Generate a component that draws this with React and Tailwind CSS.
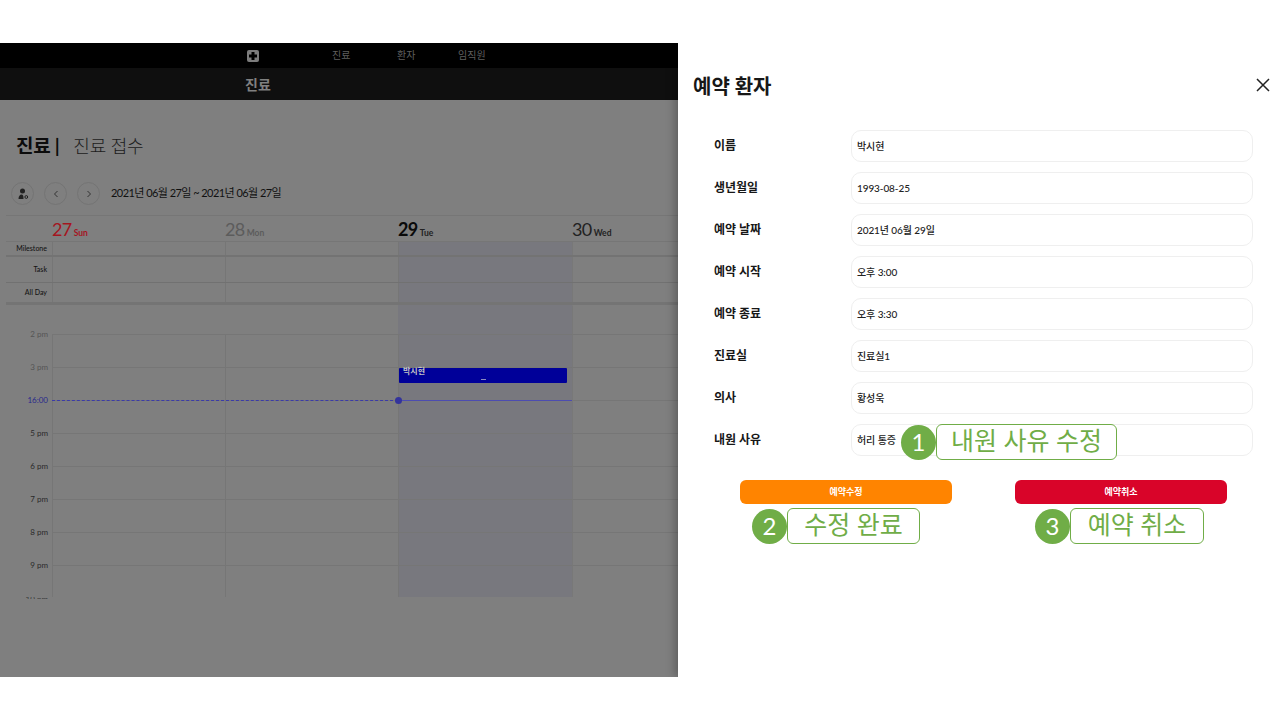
const kr = '[font-family:Lato,"Noto_Sans_CJK_KR",sans-serif]';

const Cell = ({ tue, children, className = "" }) => (
  <div className={`border-l border-[#767676] ${tue ? "bg-[#78787e]" : ""} ${className}`}>{children}</div>
);

function TopRow({ label, h, lineClass }) {
  return (
    <div className={`grid grid-cols-[46px_173px_173px_174px_1fr] ${h} ${lineClass}`}>
      <div className="flex items-center justify-end pr-[5px] text-[7px] font-medium text-[#141414]">{label}</div>
      <Cell />
      <Cell />
      <Cell tue />
      <Cell className="border-[#787878]" />
    </div>
  );
}

function HourRow({ label, h, color = "text-[#2a2a2a]", line = "border-[#767676]", children, overlay }) {
  return (
    <div className={`relative grid grid-cols-[46px_173px_173px_174px_1fr] ${h}`}>
      <div className={`pr-[4px] text-right text-[8px] leading-[10px] -mt-[5px] ${color}`}>{label}</div>
      <Cell className={`border-t ${line}`} />
      <Cell className={`border-t ${line}`} />
      <Cell tue className={`border-t ${line}`}>{children}</Cell>
      <Cell className={`border-t ${line} border-l-[#787878]`} />
      {overlay}
    </div>
  );
}

const Field = ({ label, value }) => (
  <div className="flex h-[32px] items-center">
    <div className="w-[137px] text-[12px] font-semibold text-[#171717]">{label}</div>
    <div className="flex h-[32px] w-[402px] items-center rounded-[10px] border-[1.5px] border-[#efefef] pl-[5px] text-[10px] font-medium tracking-[-0.1px] text-[#222]">{value}</div>
  </div>
);

const Note = ({ n, text, boxW, className }) => (
  <div className={`absolute flex h-[36px] items-center ${className}`}>
    <div className="z-10 flex h-[35px] w-[35px] items-center justify-center rounded-full bg-[#70ad47] text-[24px] font-normal text-white">{n}</div>
    <div className={`flex h-[36px] ${boxW} items-center justify-center rounded-[6px] border border-[#70ad47] bg-white pb-[4px] text-[25px] font-normal leading-none text-[#70ad47]`}>{text}</div>
  </div>
);

const Day = ({ num, name, numClass, nameClass = "font-bold" }) => (
  <div className={`flex items-baseline gap-[2px] text-[18px] ${numClass}`}>
    <span className="tracking-[-0.6px]">{num}</span>
    <span className={`text-[8.5px] ${nameClass}`}>{name}</span>
  </div>
);

export default function App() {
  return (
    <div className={`h-[720px] w-[1280px] overflow-hidden bg-white ${kr}`}>
      <div className="h-[43px]" />
      <div className="flex h-[634px] overflow-hidden">
        <div className="w-[678px] shrink-0 bg-[#7f7f7f]">
          <div className="flex h-[25px] items-center bg-black pl-[247px] text-[10px] text-[#5f5f5f]">
            <svg width="12" height="12" viewBox="0 0 12 12">
              <rect width="12" height="12" rx="2" fill="#7c7c7c" />
              <path d="M4.500 2h3v2.500H10v3H7.500V10h-3V7.500H2v-3h2.500z" fill="#000" />
            </svg>
            <span className="ml-[73px] w-[20px]">진료</span>
            <span className="ml-[45px] w-[20px]">환자</span>
            <span className="ml-[41px]">임직원</span>
          </div>
          <div className="flex h-[32px] items-center bg-[#0f0f0f] pl-[245px] text-[14px] font-bold text-[#808080]">진료</div>
          <div className="flex h-[82px] items-center pl-[16px] pt-[11px]">
            <span className="text-[19px] font-bold tracking-[-0.3px] text-[#0c0c0c]">진료 |</span>
            <span className="ml-[14px] text-[18px] font-light tracking-[-0.2px] text-[#1c1c1c]">진료 접수</span>
          </div>
          <div className="flex h-[23px] items-center pl-[11px] text-[#3a3a3a]">
            <div className="flex h-[23px] w-[23px] items-center justify-center rounded-full border border-[#747474]">
              <svg width="12" height="12" viewBox="0 0 12 12" fill="#222">
                <circle cx="5.500" cy="3" r="2.500" />
                <path d="M1.500 11c0-3 1.500-4.500 3-4.500S6.500 7.500 6.500 11z" />
                <circle cx="9.300" cy="9" r="1.400" fill="none" stroke="#222" />
              </svg>
            </div>
            <div className="ml-[10px] flex h-[23px] w-[23px] items-center justify-center rounded-full border border-[#747474]">
              <svg width="8" height="8" viewBox="0 0 8 8" fill="none" stroke="#333"><path d="M5.500 1 2.500 4l3 3" /></svg>
            </div>
            <div className="ml-[10px] flex h-[23px] w-[23px] items-center justify-center rounded-full border border-[#747474]">
              <svg width="8" height="8" viewBox="0 0 8 8" fill="none" stroke="#333"><path d="m2.500 1 3 3-3 3" /></svg>
            </div>
            <span className="ml-[11px] text-[11px] tracking-[-0.55px] text-[#111]">2021년 06월 27일 ~ 2021년 06월 27일</span>
          </div>
          <div className="ml-[6px] mt-[10px]">
            <div className="grid h-[27px] grid-cols-[46px_173px_173px_174px_1fr] items-end border-y border-[#767676] pb-[3px] leading-none">
              <div />
              <Day num="27" name="Sun" numClass="text-[#a5161f]" />
              <Day num="28" name="Mon" numClass="text-[#5c5c5c]" />
              <Day num="29" name="Tue" numClass="font-bold text-[#0a0a0a]" nameClass="text-[#222]" />
              <Day num="30" name="Wed" numClass="text-[#222]" />
            </div>
            <TopRow label="Milestone" h="h-[15px]" lineClass="border-b-2 border-[#737373]" />
            <TopRow label="Task" h="h-[26px]" lineClass="border-b border-[#717171]" />
            <TopRow label="All Day" h="h-[22px]" lineClass="border-b-[3px] border-[#747474]" />
            <HourRow label="" h="h-[29px]" line="border-transparent" />
            <HourRow label="2 pm" h="h-[33px]" color="text-[#555]" />
            <HourRow label="3 pm" h="h-[33px]" color="text-[#555]">
              <div className="mr-[5px] h-[15px] rounded-[1px] bg-[#000099] pl-[4px] text-[8px] font-bold leading-[7px] text-[#c4c4c4]">
                박시현
                <div className="mx-auto mt-[4px] h-px w-[5px] translate-x-[-2px] bg-[#8a8ac0]" />
              </div>
            </HourRow>
            <HourRow
              label="16:00"
              h="h-[33px]"
              color="text-[#28288c]"
              overlay={
                <div className="absolute left-[46px] top-0 flex h-px w-[520px] items-center">
                  <div className="h-px w-[346px] border-t border-dashed border-[#3a3aa8]" />
                  <div className="relative h-px w-[174px] bg-[#4c4cb0]">
                    <div className="absolute -left-[3px] -top-[3px] h-[7px] w-[7px] rounded-full bg-[#33339c]" />
                  </div>
                </div>
              }
            />
            <HourRow label="5 pm" h="h-[33px]" />
            <HourRow label="6 pm" h="h-[33px]" />
            <HourRow label="7 pm" h="h-[33px]" />
            <HourRow label="8 pm" h="h-[33px]" />
            <HourRow label="9 pm" h="h-[32px]" />
            <div className="h-[2px] w-[46px] overflow-hidden pr-[4px] text-right text-[8px] leading-[5px] text-[#3a3a3a]">10 pm</div>
          </div>
        </div>
        <div className="relative w-[602px] bg-white pl-[15px] shadow-[-3px_0_9px_rgba(0,0,0,0.28)]">
          <div className="flex h-[87px] items-start justify-between pr-[10px] pt-[29px]">
            <h1 className="text-[20px] font-bold leading-[28px] text-[#171717]">예약 환자</h1>
            <svg className="mt-[6px]" width="14" height="14" viewBox="0 0 14 14" fill="none" stroke="#222" strokeWidth="1.500">
              <path d="m1 1 12 12M13 1 1 13" />
            </svg>
          </div>
          <div className="flex flex-col gap-[10px] pl-[21px]">
            <Field label="이름" value="박시현" />
            <Field label="생년월일" value="1993-08-25" />
            <Field label="예약 날짜" value="2021년 06월 29일" />
            <Field label="예약 시작" value="오후 3:00" />
            <Field label="예약 종료" value="오후 3:30" />
            <Field label="진료실" value="진료실1" />
            <Field label="의사" value="황성욱" />
            <Field label="내원 사유" value="허리 통증" />
          </div>
          <div className="mt-[24px] flex gap-[63px] pl-[47px]">
            <div className="flex h-[24px] w-[212px] items-center justify-center rounded-[6px] bg-[#ff8400] text-[9px] font-bold text-white">예약수정</div>
            <div className="flex h-[24px] w-[212px] items-center justify-center rounded-[6px] bg-[#d90429] text-[9px] font-bold text-white">예약취소</div>
          </div>
          <Note n="1" text="내원 사유 수정" boxW="w-[181px]" className="left-[223px] top-[381px]" />
          <Note n="2" text="수정 완료" boxW="w-[133px]" className="left-[74px] top-[465px]" />
          <Note n="3" text="예약 취소" boxW="w-[134px]" className="left-[357px] top-[465px]" />
        </div>
      </div>
    </div>
  );
}
